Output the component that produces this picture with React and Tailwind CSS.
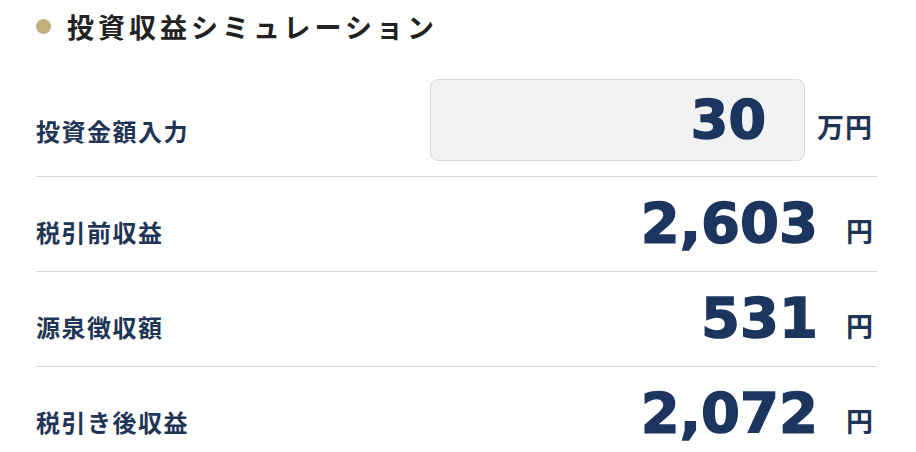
import React from "react";

const rows = [
    { label: "税引前収益", value: "2,603" },
    { label: "源泉徴収額", value: "531" },
    { label: "税引き後収益", value: "2,072" },
];

const jp = { fontFamily: '"Noto Sans CJK JP", "Noto Sans", sans-serif' };
const num = { fontFamily: '"DejaVu Sans", "Liberation Sans", sans-serif' };

function Row({ label, value }) {
    return (
        <div className="h-[95px] border-t border-[#d6d6d6] flex items-baseline justify-between pt-[18px]">
            <span style={jp} className="text-[24px] leading-none font-bold tracking-[1.5px] text-[#1f3556]">{label}</span>
            <div className="flex items-baseline">
                <span style={num} className="text-[56px] leading-none font-bold text-[#1b355f] [-webkit-text-stroke:1.5px_#1b355f]">{value}</span>
                <span style={jp} className="ml-[28px] mr-[4px] text-[27px] leading-none font-bold text-[#1f3556]">円</span>
            </div>
        </div>
    );
}

export default function App() {
    return (
        <div className="w-[916px] h-[452px] bg-white overflow-hidden">
            <div className="pl-[36px] pr-[39px]">
                <div className="flex items-center h-[52px]">
                    <span className="w-[15px] h-[15px] rounded-full bg-[#bfb07e]" />
                    <h1 style={jp} className="ml-[16px] text-[27px] leading-none font-bold tracking-[4px] text-[#222222]">
                        投資収益シミュレーション
                    </h1>
                </div>

                <div className="mt-[27px] pb-[15px] flex items-center justify-between">
                    <span style={jp} className="pt-[22px] text-[24px] leading-none font-bold tracking-[1.5px] text-[#1f3556]">投資金額入力</span>
                    <div className="flex items-baseline">
                        <div className="w-[375px] h-[82px] rounded-[8px] border border-[#d9d9d9] bg-[#f2f2f2] flex items-center justify-end pr-[38px]">
                            <span style={num} className="text-[54px] leading-none font-bold text-[#1b355f] [-webkit-text-stroke:1.5px_#1b355f]">30</span>
                        </div>
                        <span style={jp} className="ml-[12px] mr-[4px] text-[27px] leading-none font-bold tracking-[1px] text-[#1f3556]">万円</span>
                    </div>
                </div>

                {rows.map((r) => (
                    <Row key={r.label} label={r.label} value={r.value} />
                ))}
            </div>
        </div>
    );
}
